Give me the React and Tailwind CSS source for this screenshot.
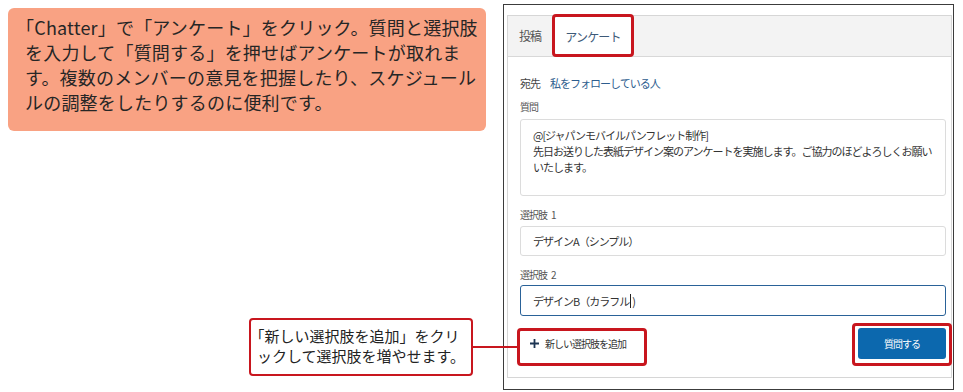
const H = ({ c }) => <span className="[font-feature-settings:'halt']">{c}</span>;

export default function App() {
  const jp = { fontFamily: '"Noto Sans CJK JP", "Noto Sans", sans-serif' };
  return (
    <div className="relative flex h-[392px] w-[963px] overflow-hidden bg-white" style={jp}>
      {/* left column: explanation + callout */}
      <div className="flex w-[503px] flex-col">
        <div className="ml-2 mt-2 h-[123px] w-[478px] rounded-md bg-[#f9a283] pl-[17px] pt-[7px] text-[18px] leading-[25px] tracking-[0.2px] text-[#262626]">
          <H c="「" />Chatter」で「アンケート」をクリック。質問と選択肢
          <br />
          を入力して「質問する」を押せばアンケートが取れま
          <br />
          す。複数のメンバーの意見を把握したり、スケジュール
          <br />
          ルの調整をしたりするのに便利です。
        </div>
        <div className="mb-[16px] ml-[249px] mt-auto h-[58px] w-[224px] rounded-[4px] border-2 border-[#c8161e] bg-white pl-[6px] pt-[6px] text-[15px] leading-[20px] text-[#222]">
          <H c="「" />新しい選択肢を追加」をクリ
          <br />
          ックして選択肢を増やせます。
        </div>
      </div>

      {/* screenshot frame */}
      <div className="relative mt-1 h-[386px] w-[451px] border border-[#3c3c3c] bg-white">
        <div className="ml-[3px] mt-[10px] flex h-[363px] w-[445px] flex-col border border-[#d6d6d6]">
          <div className="flex h-[41px] items-end border-b border-[#d8d8d8] bg-[#f3f3f3] pl-[11px]">
            <div className="flex h-[40px] items-center pr-[14px] text-[12px] tracking-[-1px] text-[#555]">投稿</div>
            <div className="flex h-[39px] w-[76px] items-center justify-center bg-white text-[12px] tracking-[-0.8px] text-[#3d5a78]">
              アンケート
            </div>
          </div>

          <div className="flex flex-col pl-[12px] pr-[5px] pt-[18px] text-[11px] leading-[16px] tracking-[-1px]">
            <div className="flex gap-[10px]">
              <span className="text-[#444]">宛先</span>
              <span className="text-[#2d5d8e]">私をフォローしている人</span>
            </div>
            <div className="mt-[8px] text-[10px] text-[#555]">質問</div>
            <div className="mt-[4px] h-[77px] rounded-[3px] border border-[#dcdcdc] px-[12px] pt-[7px] text-[#333]">
              @[ジャパンモバイルパンフレット制作]
              <br />
              先日お送りした表紙デザイン案のアンケートを実施します。ご協力のほどよろしくお願い
              <br />
              いたします。
            </div>
            <div className="mt-[11px] flex gap-[4px] text-[10px] text-[#555]">
              <span>選択肢</span>
              <span className="tracking-normal">1</span>
            </div>
            <div className="mt-[3px] flex h-[30px] items-center rounded-[3px] border border-[#dcdcdc] px-[12px] text-[#333]">
              デザインA（シンプル）
            </div>
            <div className="mt-[11px] flex gap-[4px] text-[10px] text-[#555]">
              <span>選択肢</span>
              <span className="tracking-normal">2</span>
            </div>
            <div className="mt-[2px] flex h-[31px] items-center rounded-[3px] border border-[#2a6298] px-[12px] text-[#333]">
              デザインB（カラフル
              <span className="mx-[1px] inline-block h-[14px] w-px bg-[#222]" />)
            </div>
            <div className="mt-[12px] flex items-center justify-between">
              <div className="flex items-center gap-[6px] pl-[10px] text-[#333]">
                <svg width="9" height="9" viewBox="0 0 9 9">
                  <path d="M4.5 0v9M0 4.5h9" stroke="#1d3553" strokeWidth="1.8" />
                </svg>
                <span className="text-[10px]">新しい選択肢を追加</span>
              </div>
              <div className="flex h-[31px] w-[88px] items-center justify-center rounded-[3px] bg-[#0c68ae] text-[10px] text-white">
                質問する
              </div>
            </div>
          </div>
        </div>

        {/* red highlight boxes */}
        <div className="absolute left-[48px] top-[9px] h-[43px] w-[82px] rounded-[4px] border-[3px] border-[#c8161e]" />
        <div className="absolute left-[13px] top-[323px] h-[38px] w-[130px] rounded-[4px] border-[3px] border-[#c8161e]" />
        <div className="absolute left-[348px] top-[318px] h-[43px] w-[100px] rounded-[4px] border-[3px] border-[#c8161e]" />
      </div>

      {/* connector line */}
      <div className="absolute left-[472px] top-[346px] h-[2px] w-[46px] bg-[#c8161e]" />
    </div>
  );
}
